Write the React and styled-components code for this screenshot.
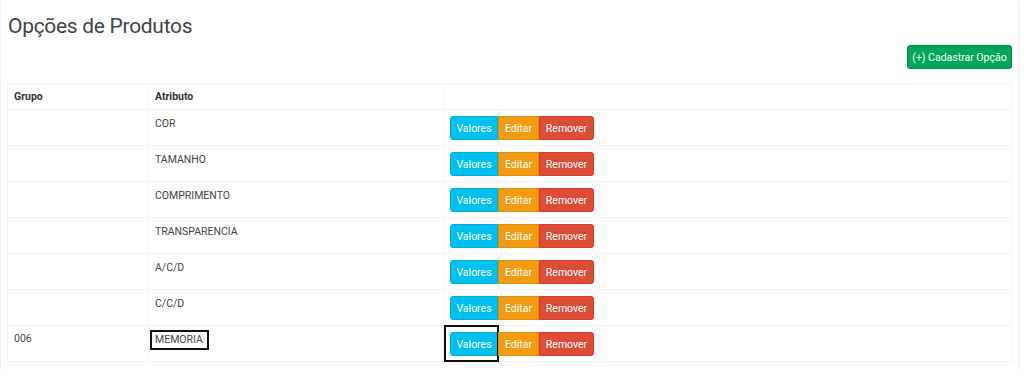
import React from "react";
import styled, { createGlobalStyle } from "styled-components";

const rows = [
  { grupo: "", atributo: "COR" },
  { grupo: "", atributo: "TAMANHO" },
  { grupo: "", atributo: "COMPRIMENTO" },
  { grupo: "", atributo: "TRANSPARENCIA" },
  { grupo: "", atributo: "A/C/D" },
  { grupo: "", atributo: "C/C/D" },
  { grupo: "006", atributo: "MEMORIA", marked: true },
];

const GlobalStyle = createGlobalStyle`
  body {
    margin: 0;
    background: #ffffff;
    font-family: Roboto, "Noto Sans", sans-serif;
    color: #444;
  }
`;

const Page = styled.div`
  width: 1024px;
  padding: 0 5px 0 0;
  box-sizing: border-box;
`;

const Box = styled.div`
  background: #fff;
  padding: 12px 6px 7px 6px;
  box-shadow: 0 1px 2px rgba(0, 0, 0, 0.1);
  border-left: 1px solid #f2f2f2;
  border-right: 1px solid #f2f2f2;
`;

const Title = styled.h1`
  margin: 0 0 0 1px;
  font-size: 21px;
  font-weight: 400;
  letter-spacing: -0.3px;
  color: #444;
  line-height: 28px;
`;

const Toolbar = styled.div`
  display: flex;
  justify-content: flex-end;
  margin-top: 5px;
  margin-bottom: 14px;
`;

const AddButton = styled.button`
  background: #00a65a;
  border: 1px solid #008d4c;
  border-radius: 3px;
  color: #fff;
  font-family: inherit;
  font-size: 10.5px;
  height: 24px;
  width: 105px;
  padding: 0;
  cursor: pointer;
`;

const Table = styled.table`
  width: 100%;
  border-collapse: collapse;
  font-size: 10.5px;
  border: 1px solid #f4f4f4;
`;

const Th = styled.th`
  text-align: left;
  font-weight: 700;
  color: #333;
  padding: 6px 6px;
  height: 13px;
  border: 1px solid #f4f4f4;
  width: ${(p) => p.w || "auto"};
`;

const Td = styled.td`
  vertical-align: top;
  padding: 6px 6px 5px 6px;
  height: 24px;
  border: 1px solid #f4f4f4;
`;

const Cell = styled.span`
  position: relative;
  display: inline-block;
  line-height: 14px;
  margin-top: 1px;
  &::after {
    content: "";
    display: ${(p) => (p.marked ? "block" : "none")};
    position: absolute;
    left: -5px;
    right: -6px;
    top: -3px;
    bottom: -3px;
    border: 2px solid #111;
  }
`;

const Group = styled.div`
  display: flex;
`;

const Btn = styled.button`
  position: relative;
  height: 24px;
  width: ${(p) => p.w}px;
  padding: 0;
  border: 1px solid ${(p) => p.border};
  background: ${(p) => p.bg};
  color: #fff;
  font-family: inherit;
  font-size: 10.5px;
  border-radius: ${(p) => p.radius};
  cursor: pointer;
  &::after {
    content: "";
    display: ${(p) => (p.marked ? "block" : "none")};
    position: absolute;
    left: -7px;
    right: -2px;
    top: -8px;
    bottom: -7px;
    border: 2px solid #111;
  }
`;

function Actions({ marked }) {
  return (
    <Group>
      <Btn w={48} bg="#00c0ef" border="#00acd6" radius="3px 0 0 3px" marked={marked}>
        Valores
      </Btn>
      <Btn w={41} bg="#f39c12" border="#e08e0b" radius="0">
        Editar
      </Btn>
      <Btn w={55} bg="#dd4b39" border="#d73925" radius="0 3px 3px 0">
        Remover
      </Btn>
    </Group>
  );
}

export default function App() {
  return (
    <Page>
      <GlobalStyle />
      <Box>
        <Title>Opções de Produtos</Title>
        <Toolbar>
          <AddButton>(+) Cadastrar Opção</AddButton>
        </Toolbar>
        <Table>
          <thead>
            <tr>
              <Th w="128px">Grupo</Th>
              <Th w="282px">Atributo</Th>
              <Th />
            </tr>
          </thead>
          <tbody>
            {rows.map((r, i) => (
              <tr key={i}>
                <Td>{r.grupo}</Td>
                <Td>
                  <Cell marked={r.marked}>{r.atributo}</Cell>
                </Td>
                <Td>
                  <Actions marked={r.marked} />
                </Td>
              </tr>
            ))}
          </tbody>
        </Table>
      </Box>
    </Page>
  );
}
